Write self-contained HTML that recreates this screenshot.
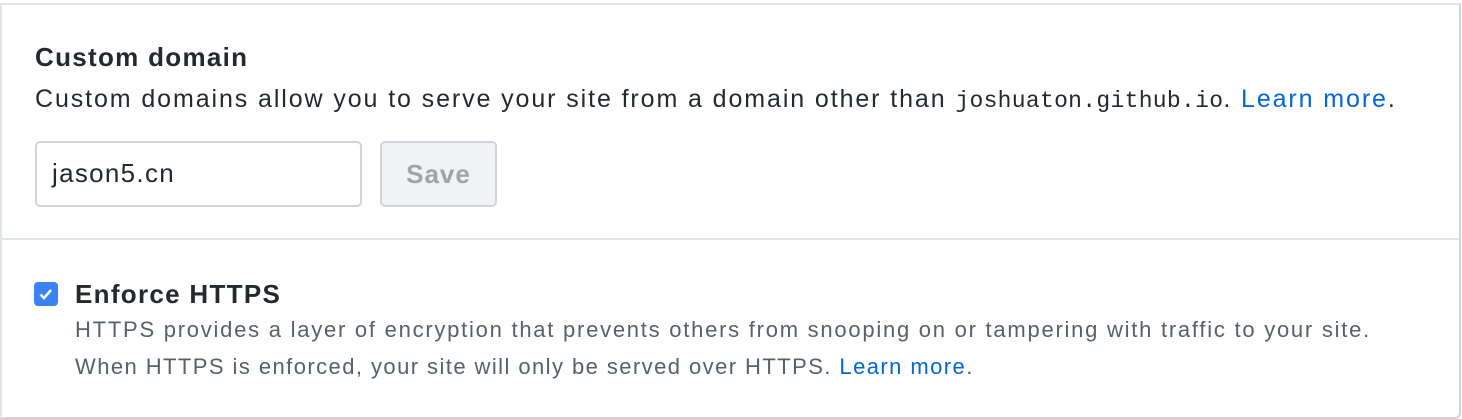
<!DOCTYPE html>
<html><head><style>
body{margin:0;width:1462px;height:418px;background:#fff;font-family:"Liberation Sans",sans-serif;color:#24292e;position:relative;overflow:hidden}
.box{position:absolute;left:0;top:3px;width:1457px;height:412px;border:2px solid #e1e4e8;border-right-color:#d1d5da;border-bottom-color:#d1d5da;border-radius:0 0 6px 0;box-sizing:content-box}
.div{position:absolute;left:0;top:238px;width:1459px;height:2px;background:#e1e4e8}
.t{position:absolute;white-space:nowrap}
a{color:#0366d6;text-decoration:none}
code{font-family:"Liberation Mono",monospace;font-size:23px;letter-spacing:0.3px}
</style></head><body>
<div class="box"></div>
<div class="div"></div>
<div class="t" style="left:35px;top:42px;font-size:26px;font-weight:bold;letter-spacing:1.3px">Custom domain</div>
<div class="t" style="left:35px;top:85px;font-size:25px;letter-spacing:1.9px">Custom domains allow you to serve your site from a domain other than <code>joshuaton.github.io</code>. <a>Learn more</a>.</div>
<div style="position:absolute;left:35px;top:141px;width:327px;height:66px;border:2px solid #d1d5da;border-radius:5px;box-sizing:border-box"></div>
<div class="t" style="left:52px;top:158px;font-size:26px;letter-spacing:1.3px">jason5.cn</div>
<div style="position:absolute;left:380px;top:141px;width:117px;height:66px;border:2px solid #d1d5da;border-radius:5px;box-sizing:border-box;background:#eff3f6;color:#a0a4a8;font-size:26px;font-weight:bold;letter-spacing:1px;text-align:center;line-height:62px">Save</div>
<div style="position:absolute;left:34px;top:282px;width:24px;height:24px;border-radius:4px;background:#3b82f6">
<svg width="24" height="24" viewBox="0 0 24 24"><path d="M6.5 12.5l3.5 3.5 7-8" stroke="#fff" stroke-width="2.6" fill="none"/></svg></div>
<div class="t" style="left:75px;top:279px;font-size:26px;font-weight:bold;letter-spacing:1.3px">Enforce HTTPS</div>
<div class="t" style="left:75px;top:317px;font-size:22px;letter-spacing:1.75px;color:#586069">HTTPS provides a layer of encryption that prevents others from snooping on or tampering with traffic to your site.</div>
<div class="t" style="left:75px;top:354px;font-size:22px;letter-spacing:1.43px;color:#586069">When HTTPS is enforced, your site will only be served over HTTPS. <a>Learn more</a>.</div>
</body></html>
